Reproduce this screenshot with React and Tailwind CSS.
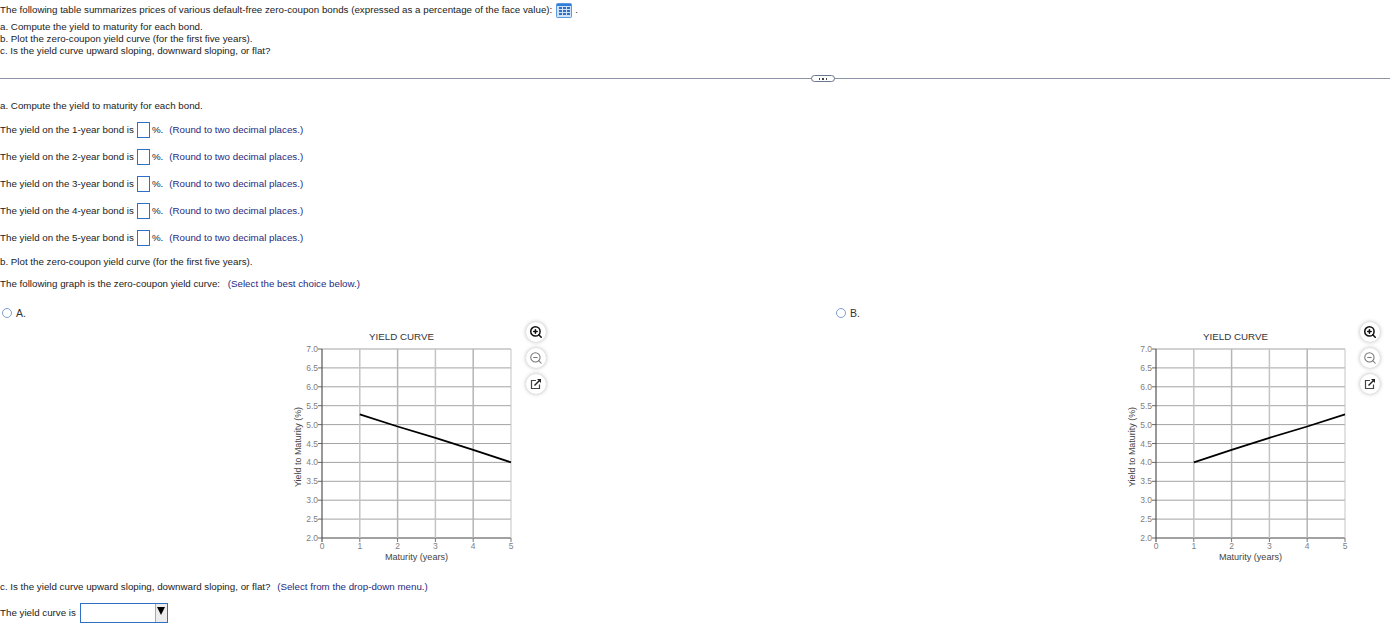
import React from 'react'
import { ZoomIn, ZoomOut } from 'lucide-react'

const years = [1, 2, 3, 4, 5]
const ticks = ['7.0', '6.5', '6.0', '5.5', '5.0', '4.5', '4.0', '3.5', '3.0', '2.5', '2.0']

function TableIcon() {
  return (
    <svg width="16" height="15" viewBox="0 0 16 15" className="ml-[4px] shrink-0">
      <rect x="0" y="0" width="16" height="15" rx="1" fill="#cfe2f7" />
      <rect x="0.5" y="0.5" width="15" height="14" rx="1" fill="none" stroke="#5b9ae0" />
      <rect x="1" y="1" width="14" height="2" fill="#2f7fd8" />
      {[3, 7, 11].map(x =>
        [4, 7, 10].map(y => <rect key={`${x}-${y}`} x={x} y={y} width="3" height="2" fill="#2f6fc4" />)
      )}
    </svg>
  )
}

function YieldChart({ values }) {
  const px = x => 42 + x * 37.8
  const py = v => 216 - (v - 2) * 37.8
  const points = values.map((v, i) => `${px(i + 1)},${py(v)}`).join(' ')
  return (
    <svg width="240" height="244" viewBox="0 0 240 244" className="shrink-0 font-['Liberation_Sans',sans-serif]">
      <text x="121.5" y="18" textAnchor="middle" fontSize="9.75" fill="#333">YIELD CURVE</text>
      {ticks.map((t, i) => {
        const y = 27 + i * 18.9
        return (
          <g key={t}>
            <line x1="42" x2="231" y1={y} y2={y} stroke={i === 10 ? '#444' : '#a3a3a3'} />
            <line x1="38" x2="42" y1={y} y2={y} stroke="#666" />
            <text x="38" y={y + 3} textAnchor="end" fontSize="8.5" fill="#808080">{t}</text>
          </g>
        )
      })}
      {years.map(x => (
        <g key={x}>
          <line x1={px(x)} x2={px(x)} y1="27" y2="216" stroke={x % 2 ? '#c4c4c4' : '#b5b5b5'} strokeWidth={x === 5 ? 1 : 1.5} />
          <line x1={px(x)} x2={px(x)} y1="216" y2="220" stroke="#777" />
          <text x={px(x)} y="227" textAnchor="middle" fontSize="8.5" fill="#808080">{x}</text>
        </g>
      ))}
      <line x1="42" x2="42" y1="27" y2="220" stroke="#555" strokeWidth="1.2" />
      <text x="42" y="227" textAnchor="middle" fontSize="8.5" fill="#808080">0</text>
      <polyline points={points} fill="none" stroke="#000" strokeWidth="1.8" />
      <text x="136.5" y="238" textAnchor="middle" fontSize="9.1" fill="#444">Maturity (years)</text>
      <text transform="translate(21 125) rotate(-90)" textAnchor="middle" fontSize="8.95" fill="#444">Yield to Maturity (%)</text>
    </svg>
  )
}

function ChartButton({ children }) {
  return (
    <button className="w-[20px] h-[20px] rounded-full bg-white shadow-[0_0_4px_rgba(0,0,0,0.3)] flex items-center justify-center">
      {children}
    </button>
  )
}

function ChartOption({ letter, values, width }) {
  return (
    <div className={`flex items-start shrink-0 ${width}`}>
      <div className="w-[280px] shrink-0 flex items-center h-[14px] pl-[2px]">
        <input type="radio" className="appearance-none w-[10px] h-[10px] rounded-full border border-[#7d9fd0] bg-white" />
        <span className="ml-[4px] text-[10.5px] text-[#333]">{letter}.</span>
      </div>
      <div className="mt-[16px] flex items-start">
        <YieldChart values={values} />
        <div className="ml-[6px] flex flex-col gap-[6px]">
          <ChartButton><ZoomIn size={14} strokeWidth={2.6} color="#111" /></ChartButton>
          <ChartButton><ZoomOut size={14} strokeWidth={1.8} color="#777" /></ChartButton>
          <ChartButton>
            <svg width="12" height="12" viewBox="0 0 12 12" fill="none">
              <path d="M6 2.5H1.5v8h8V6.5" stroke="#444" strokeWidth="1.2" />
              <path d="M4.5 7.5L9.5 2.5" stroke="#222" strokeWidth="1.4" />
              <path d="M7 1h4v4z" fill="#222" />
            </svg>
          </ChartButton>
        </div>
      </div>
    </div>
  )
}

function YieldRow({ year }) {
  return (
    <div className="flex items-center h-[16px]">
      <span>The yield on the {year}-year bond is</span>
      <input type="text" className="ml-[3px] w-[13px] h-[16px] border border-[#2f6fc4] bg-white" />
      <span className="ml-[2px]">%.</span>
      <span className="ml-[6px] text-[#1f2a80]">(Round to two decimal places.)</span>
    </div>
  )
}

export default function App() {
  return (
    <div className="w-[1390px] h-[640px] overflow-hidden bg-white text-[#222] text-[9.75px] leading-[12px] font-['Liberation_Sans',sans-serif]">
      <div className="pt-[4px]">
        <div className="flex items-center h-[12px]">
          <span>The following table summarizes prices of various default-free zero-coupon bonds (expressed as a percentage of the face value):</span>
          <TableIcon />
          <span className="ml-[3px]">.</span>
        </div>
        <p className="mt-[5px]">a. Compute the yield to maturity for each bond.</p>
        <p>b. Plot the zero-coupon yield curve (for the first five years).</p>
        <p>c. Is the yield curve upward sloping, downward sloping, or flat?</p>
      </div>

      <div className="relative mt-[21px] h-px bg-[#8a94a6]">
        <div className="absolute left-[811px] top-[-3px] w-[24px] h-[7px] rounded-full border border-[#6b778c] bg-white flex items-center justify-center gap-[2px]">
          <span className="w-[1.5px] h-[2px] bg-[#444]" />
          <span className="w-[1.5px] h-[2px] bg-[#444]" />
          <span className="w-[1.5px] h-[2px] bg-[#444]" />
        </div>
      </div>

      <p className="mt-[21px]">a. Compute the yield to maturity for each bond.</p>
      <div className="mt-[10px] flex flex-col gap-[11px]">
        {years.map(y => <YieldRow key={y} year={y} />)}
      </div>

      <p className="mt-[10px]">b. Plot the zero-coupon yield curve (for the first five years).</p>
      <p className="mt-[10px]">
        The following graph is the zero-coupon yield curve: <span className="ml-[5px] text-[#1f2a80]">(Select the best choice below.)</span>
      </p>

      <div className="mt-[16px] flex h-[264px]">
        <ChartOption letter="A" values={[5.27, 4.95, 4.65, 4.33, 4]} width="w-[834px]" />
        <ChartOption letter="B" values={[4, 4.33, 4.65, 4.95, 5.27]} width="w-[556px]" />
      </div>

      <p className="mt-[11px]">
        c. Is the yield curve upward sloping, downward sloping, or flat? <span className="ml-[4px] text-[#1f2a80]">(Select from the drop-down menu.)</span>
      </p>
      <div className="mt-[10px] flex items-center h-[20px]">
        <span>The yield curve is</span>
        <div className="ml-[4px] w-[88px] h-[20px] border border-[#2f6fc4] bg-white flex justify-end">
          <div className="w-[12px] h-[18px] bg-[#ececec] border-l border-[#aaa] flex items-start justify-center pt-[3px]">
            <svg width="8" height="8" viewBox="0 0 8 8"><path d="M0 0h8L4 8z" fill="#000" /></svg>
          </div>
        </div>
      </div>
    </div>
  )
}
